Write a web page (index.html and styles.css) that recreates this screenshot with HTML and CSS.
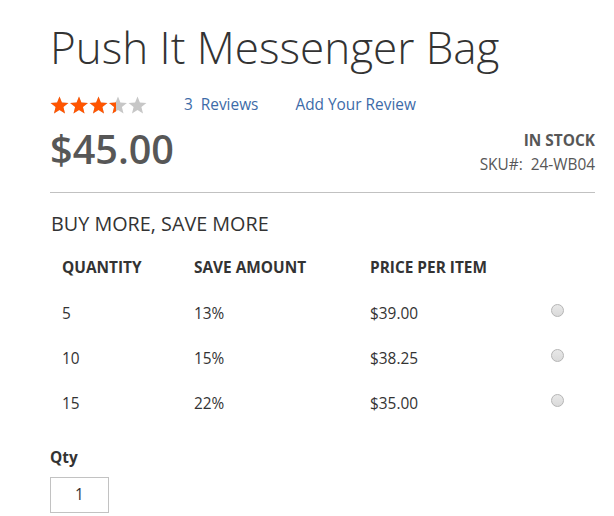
FILE: index.html
```html
<!DOCTYPE html>
<html>
<head>
<meta charset="utf-8">
<link rel="stylesheet" href="styles.css">
</head>
<body>
<div class="page">
  <h1 class="title">Push It Messenger Bag</h1>
  <div class="rating-row">
    <svg class="stars" width="98" height="18" viewBox="0 0 98 18">
      <defs>
        <clipPath id="fillclip"><rect x="0" y="0" width="66" height="18"/></clipPath>
      </defs>
      <g fill="#c7c7c7">
        <polygon transform="translate(9.5 9.8)" points="0,-9.4 2.41,-3.317 8.94,-2.905 3.899,1.267 5.525,7.605 0,4.1 -5.525,7.605 -3.899,1.267 -8.94,-2.905 -2.41,-3.317"/>
        <polygon transform="translate(29 9.8)" points="0,-9.4 2.41,-3.317 8.94,-2.905 3.899,1.267 5.525,7.605 0,4.1 -5.525,7.605 -3.899,1.267 -8.94,-2.905 -2.41,-3.317"/>
        <polygon transform="translate(48.5 9.8)" points="0,-9.4 2.41,-3.317 8.94,-2.905 3.899,1.267 5.525,7.605 0,4.1 -5.525,7.605 -3.899,1.267 -8.94,-2.905 -2.41,-3.317"/>
        <polygon transform="translate(68 9.8)" points="0,-9.4 2.41,-3.317 8.94,-2.905 3.899,1.267 5.525,7.605 0,4.1 -5.525,7.605 -3.899,1.267 -8.94,-2.905 -2.41,-3.317"/>
        <polygon transform="translate(87.5 9.8)" points="0,-9.4 2.41,-3.317 8.94,-2.905 3.899,1.267 5.525,7.605 0,4.1 -5.525,7.605 -3.899,1.267 -8.94,-2.905 -2.41,-3.317"/>
      </g>
      <g fill="#ff5501" clip-path="url(#fillclip)">
        <polygon transform="translate(9.5 9.8)" points="0,-9.4 2.41,-3.317 8.94,-2.905 3.899,1.267 5.525,7.605 0,4.1 -5.525,7.605 -3.899,1.267 -8.94,-2.905 -2.41,-3.317"/>
        <polygon transform="translate(29 9.8)" points="0,-9.4 2.41,-3.317 8.94,-2.905 3.899,1.267 5.525,7.605 0,4.1 -5.525,7.605 -3.899,1.267 -8.94,-2.905 -2.41,-3.317"/>
        <polygon transform="translate(48.5 9.8)" points="0,-9.4 2.41,-3.317 8.94,-2.905 3.899,1.267 5.525,7.605 0,4.1 -5.525,7.605 -3.899,1.267 -8.94,-2.905 -2.41,-3.317"/>
        <polygon transform="translate(68 9.8)" points="0,-9.4 2.41,-3.317 8.94,-2.905 3.899,1.267 5.525,7.605 0,4.1 -5.525,7.605 -3.899,1.267 -8.94,-2.905 -2.41,-3.317"/>
      </g>
    </svg>
    <a class="link reviews">3&nbsp; Reviews</a>
    <a class="link add">Add Your Review</a>
  </div>
  <div class="price-row">
    <div class="price">$45.00</div>
    <div class="stock">
      <div class="instock">IN STOCK</div>
      <div class="sku">SKU#:&nbsp; 24-WB04</div>
    </div>
  </div>
  <h2 class="tier-title">BUY MORE, SAVE MORE</h2>
  <div class="tiers">
    <div class="trow thead">
      <div>QUANTITY</div><div>SAVE AMOUNT</div><div>PRICE PER ITEM</div><div></div>
    </div>
    <div class="trow">
      <div>5</div><div>13%</div><div>$39.00</div><div class="rcell"><span class="radio"></span></div>
    </div>
    <div class="trow">
      <div>10</div><div>15%</div><div>$38.25</div><div class="rcell"><span class="radio"></span></div>
    </div>
    <div class="trow">
      <div>15</div><div>22%</div><div>$35.00</div><div class="rcell"><span class="radio"></span></div>
    </div>
  </div>
  <div class="qty-label">Qty</div>
  <div class="qty-box">1</div>
</div>
</body>
</html>
```
FILE: styles.css
```css
html, body { margin: 0; padding: 0; background: #fff; }
body { font-family: "Open Sans", "Noto Sans", sans-serif; color: #333; font-size: 15.4px; }
.page { width: 545px; padding: 0 0 0 50px; }
.title { margin: 23px 0 0 0; font-size: 44px; font-weight: 300; line-height: 48px; color: #333; }
.rating-row { display: flex; align-items: center; margin-top: 23px; height: 22px; }
.stars { display: block; flex: none; }
.link { color: #3d6ba8; font-size: 15.4px; line-height: 22px; text-decoration: none; }
.reviews { margin-left: 36px; }
.add { margin-left: 37px; }
.price-row { display: flex; justify-content: space-between; align-items: flex-start; margin-top: 8px; border-bottom: 1px solid #c1c1c1; padding-bottom: 16px; }
.price { font-size: 39.6px; font-weight: 600; color: #575757; line-height: 50px; }
.stock { text-align: right; padding-top: 6px; }
.instock { font-weight: 700; font-size: 15.4px; color: #575757; line-height: 22px; }
.sku { font-size: 15.4px; color: #575757; line-height: 22px; margin-top: 2px; }
.tier-title { margin: 17px 0 0 1px; font-size: 19.8px; font-weight: 400; line-height: 28px; color: #333; }
.tiers { margin-top: 19px; }
.trow { display: grid; grid-template-columns: 132px 176px 181px 1fr; padding-left: 12px; line-height: 45px; height: 45px; color: #333; }
.trow.thead { font-weight: 700; line-height: 22px; height: 22px; margin-bottom: 12px; }
.rcell { padding-top: 13px; line-height: 0; }
.radio { display: inline-block; width: 11px; height: 11px; border-radius: 50%; border: 1px solid #b5b5b5; background: linear-gradient(#e8e8e8, #dadada); }
.qty-label { font-weight: 700; margin-top: 21px; line-height: 22px; color: #333; }
.qty-box { width: 57px; height: 34px; border: 1px solid #c2c2c2; margin-top: 8px; text-align: center; line-height: 34px; color: #333; }
```
